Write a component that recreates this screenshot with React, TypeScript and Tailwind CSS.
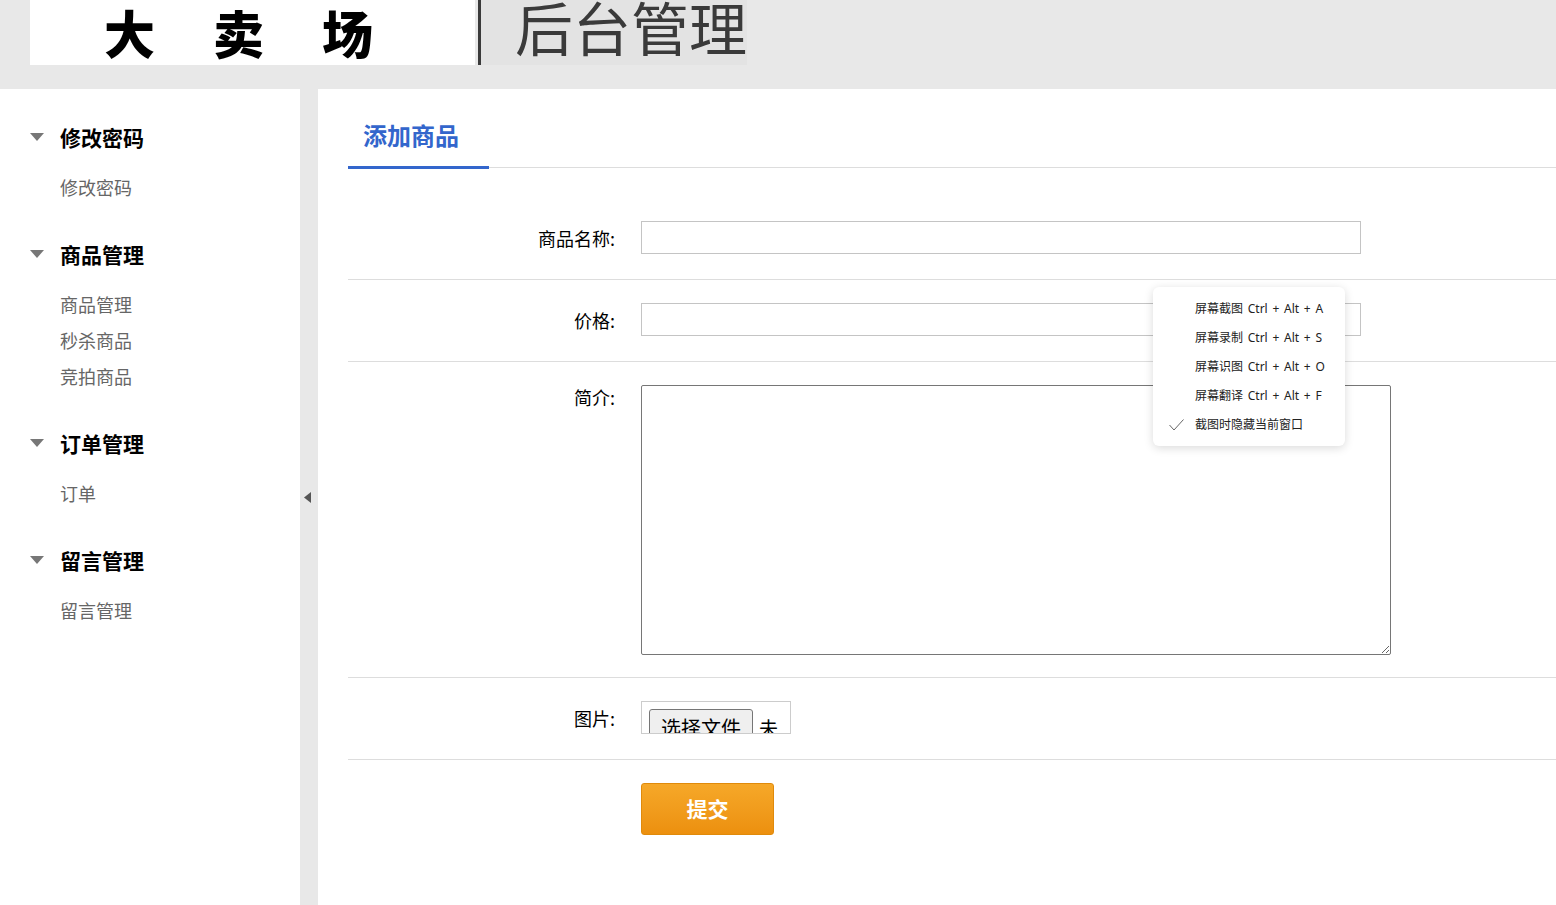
const sections = [
  { title: "修改密码", items: ["修改密码"] },
  { title: "商品管理", items: ["商品管理", "秒杀商品", "竞拍商品"] },
  { title: "订单管理", items: ["订单"] },
  { title: "留言管理", items: ["留言管理"] },
];

const menuItems = ["屏幕截图 Ctrl + Alt + A", "屏幕录制 Ctrl + Alt + S", "屏幕识图 Ctrl + Alt + O", "屏幕翻译 Ctrl + Alt + F"];

const Header = () => (
  <div className="h-[89px] bg-[#e8e8e8] flex items-start">
    <div className="ml-[30px] w-[445px] h-[65px] bg-white flex items-center pl-[74px] pb-[2px] gap-[58px] text-[51px] leading-[56px] font-black text-black">
      <span>大</span>
      <span>卖</span>
      <span>场</span>
    </div>
    <div className="w-[3px] h-[65px] ml-[3px] bg-[#3a3a3a]" />
    <div className="w-[266px] h-[65px] bg-[#e3e3e3] overflow-hidden pl-[34px]">
      <div className="text-[58px] leading-[58px] -mt-[3px] text-[#3a3a3a]">后台管理</div>
    </div>
  </div>
);

const Sidebar = () => (
  <div className="w-[300px] bg-white pt-[33px] pl-[30px]">
    {sections.map((s) => (
      <div key={s.title} className="mb-[34px]">
        <div className="flex items-center h-[30px]">
          <svg width="14" height="8" viewBox="0 0 14 8" className="mr-[16px]">
            <path d="M0 0 L14 0 L7 8 Z" fill="#777" />
          </svg>
          <span className="text-[21px] font-bold text-black leading-[30px]">{s.title}</span>
        </div>
        <div className="mt-[17px] pl-[30px]">
          {s.items.map((it) => (
            <div key={it} className="text-[18px] leading-[36px] text-[#666]">
              {it}
            </div>
          ))}
        </div>
      </div>
    ))}
  </div>
);

const Row = ({ label, children, tall }: { label: string; children: React.ReactNode; tall?: boolean }) => (
  <div className={`flex border-b border-[#dddddd] pt-[23px] ${tall ? "pb-[22px]" : "pb-[25px]"}`}>
    <div className={`w-[267px] text-right text-[18px] text-black ${tall ? "leading-[24px]" : "leading-[32px] pt-[1px]"}`}>{label}</div>
    <div className="ml-[26px]">{children}</div>
  </div>
);

const ContextMenu = () => (
  <div className="absolute left-[1153px] top-[287px] w-[192px] h-[159px] bg-white rounded-[6px] shadow-[0_2px_10px_rgba(0,0,0,0.15)] pt-[7px] font-['Noto_Sans','Noto_Sans_CJK_SC',sans-serif] text-[12px] text-[#222] [word-spacing:1.6px]">
    {menuItems.map((m) => (
      <div key={m} className="h-[29px] leading-[29px] pl-[42px]">
        {m}
      </div>
    ))}
    <div className="h-[29px] leading-[29px] flex items-center pl-[16px]">
      <svg width="15" height="12" viewBox="0 0 15 12" className="mr-[11px]">
        <path d="M0.5 6 L5 11 L14.5 0.5" fill="none" stroke="#666" strokeWidth="1" />
      </svg>
      截图时隐藏当前窗口
    </div>
  </div>
);

export default function App() {
  return (
    <div className="relative w-[1556px] h-[905px] overflow-hidden bg-white font-['Noto_Sans_CJK_SC',sans-serif]">
      <Header />
      <div className="flex h-[816px]">
        <Sidebar />
        <div className="w-[18px] bg-[#e8e8e8] flex items-center justify-center">
          <svg width="7" height="11" viewBox="0 0 7 11" className="-ml-[4px] mt-[1px]">
            <path d="M7 0 L0 5.5 L7 11 Z" fill="#555" />
          </svg>
        </div>
        <div className="flex-1 pl-[30px]">
          <div className="flex border-b border-[#dddddd]">
            <div className="w-[141px] pl-[15px] pt-[31px] pb-[16px] border-b-[3px] border-[#3366cc] -mb-[2px] text-[24px] leading-[30px] font-bold text-[#3366cc]">
              添加商品
            </div>
          </div>
          <div className="mt-[30px]">
            <Row label="商品名称:">
              <input className="block w-[720px] h-[33px] border border-[#c4c4c4] outline-none" />
            </Row>
            <Row label="价格:">
              <input className="block w-[720px] h-[33px] border border-[#c4c4c4] outline-none" />
            </Row>
            <Row label="简介:" tall>
              <textarea className="block w-[750px] h-[270px] border border-[#767676] rounded-[2px] outline-none resize" />
            </Row>
            <Row label="图片:">
              <div className="w-[150px] h-[33px] border border-[#cccccc] overflow-hidden pl-[7px] pt-[7px] flex items-start gap-[6px]">
                <span className="shrink-0 border border-[#767676] rounded-[3px] bg-[#efefef] px-[11px] pt-[4px] text-[20px] leading-[28px] text-black">
                  选择文件
                </span>
                <span className="w-[20px] shrink-0 pt-[5px] text-[19px] leading-[28px] text-black break-all">未选择任何文件</span>
              </div>
            </Row>
            <div className="pt-[23px] pl-[293px]">
              <button className="w-[133px] h-[52px] rounded-[3px] border border-[#e08a0b] bg-gradient-to-b from-[#f6a828] to-[#ec900e] text-white text-[21px] font-bold">
                提交
              </button>
            </div>
          </div>
        </div>
      </div>
      <ContextMenu />
    </div>
  );
}
